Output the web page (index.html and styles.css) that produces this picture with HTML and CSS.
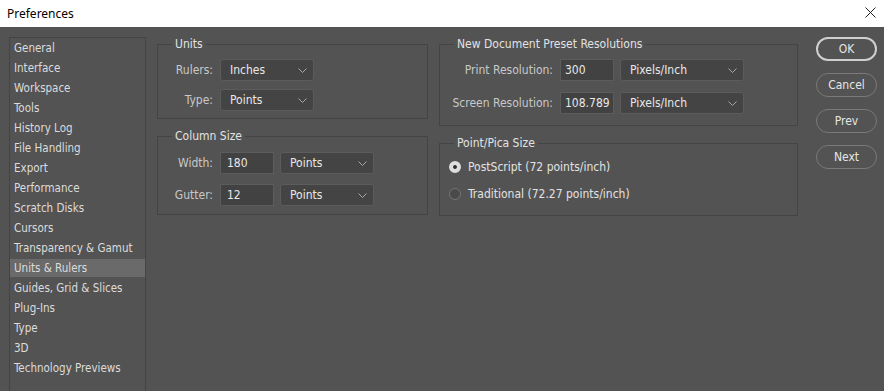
FILE: index.html
```
<!DOCTYPE html>
<html lang="en">

<head>
    <meta charset="utf-8">
    <title>Preferences</title>
    <link rel="stylesheet" href="styles.css">
</head>

<body>

    <header class="titlebar">
        <span class="title">Preferences</span>
        <svg class="luk" width="11" height="11" viewBox="0 0 11 11">
            <path d="M0.5 0.5 L10.5 10.5 M10.5 0.5 L0.5 10.5" stroke="#222" stroke-width="1" fill="none" />
        </svg>
    </header>

    <main class="dialog">
        <ul class="sidebar">
            <li>General</li>
            <li>Interface</li>
            <li>Workspace</li>
            <li>Tools</li>
            <li>History Log</li>
            <li>File Handling</li>
            <li>Export</li>
            <li>Performance</li>
            <li>Scratch Disks</li>
            <li>Cursors</li>
            <li>Transparency &amp; Gamut</li>
            <li class="valgt">Units &amp; Rulers</li>
            <li>Guides, Grid &amp; Slices</li>
            <li>Plug-Ins</li>
            <li>Type</li>
            <li>3D</li>
            <li>Technology Previews</li>
        </ul>

        <section class="kolonne venstre">
            <fieldset class="gruppe units">
                <legend>Units</legend>
                <div class="raekke">
                    <label>Rulers:</label>
                    <div class="vaelg">Inches<svg width="9" height="5" viewBox="0 0 9 5"><path d="M0.5 0.5 L4.5 4.5 L8.5 0.5" /></svg></div>
                </div>
                <div class="raekke">
                    <label>Type:</label>
                    <div class="vaelg">Points<svg width="9" height="5" viewBox="0 0 9 5"><path d="M0.5 0.5 L4.5 4.5 L8.5 0.5" /></svg></div>
                </div>
            </fieldset>

            <fieldset class="gruppe kolonnestr">
                <legend>Column Size</legend>
                <div class="raekke">
                    <label>Width:</label>
                    <div class="felt">180</div>
                    <div class="vaelg">Points<svg width="9" height="5" viewBox="0 0 9 5"><path d="M0.5 0.5 L4.5 4.5 L8.5 0.5" /></svg></div>
                </div>
                <div class="raekke">
                    <label>Gutter:</label>
                    <div class="felt">12</div>
                    <div class="vaelg">Points<svg width="9" height="5" viewBox="0 0 9 5"><path d="M0.5 0.5 L4.5 4.5 L8.5 0.5" /></svg></div>
                </div>
            </fieldset>
        </section>

        <section class="kolonne hoejre">
            <fieldset class="gruppe oploesning">
                <legend>New Document Preset Resolutions</legend>
                <div class="raekke">
                    <label>Print Resolution:</label>
                    <div class="felt">300</div>
                    <div class="vaelg">Pixels/Inch<svg width="9" height="5" viewBox="0 0 9 5"><path d="M0.5 0.5 L4.5 4.5 L8.5 0.5" /></svg></div>
                </div>
                <div class="raekke">
                    <label>Screen Resolution:</label>
                    <div class="felt">108.789</div>
                    <div class="vaelg">Pixels/Inch<svg width="9" height="5" viewBox="0 0 9 5"><path d="M0.5 0.5 L4.5 4.5 L8.5 0.5" /></svg></div>
                </div>
            </fieldset>

            <fieldset class="gruppe pica">
                <legend>Point/Pica Size</legend>
                <div class="radio valgt"><span class="prik"></span>PostScript (72 points/inch)</div>
                <div class="radio"><span class="prik"></span>Traditional (72.27 points/inch)</div>
            </fieldset>
        </section>

        <nav class="knapper">
            <button class="knap ok">OK</button>
            <button class="knap">Cancel</button>
            <button class="knap">Prev</button>
            <button class="knap">Next</button>
        </nav>
    </main>

</body>

</html>
```

FILE: styles.css
```
body {
    margin: 0;
    width: 884px;
    height: 391px;
    overflow: hidden;
    background-color: #535353;
    font-family: "DejaVu Sans Condensed", "DejaVu Sans", sans-serif;
    font-stretch: condensed;
    font-size: 11px;
    color: #dcdcdc;
}

.titlebar {
    height: 27px;
    background-color: #ffffff;
    display: flex;
    align-items: center;
    justify-content: space-between;
    padding: 0 8px 0 7px;
}

.title {
    font-family: "Noto Sans", sans-serif;
    font-stretch: normal;
    font-size: 12px;
    color: #000000;
}

.luk {
    margin-bottom: 3px;
}

.dialog {
    display: flex;
    align-items: flex-start;
    height: 364px;
}

/* venstre liste */
.sidebar {
    list-style: none;
    margin: 10px 0 0 9px;
    padding: 0;
    width: 135px;
    height: 360px;
    border: 1px solid #444444;
    border-bottom: none;
}

.sidebar li {
    height: 18px;
    line-height: 18px;
    border-top: 1px solid transparent;
    border-bottom: 1px solid transparent;
    background-clip: padding-box;
    padding-left: 4px;
    white-space: nowrap;
    font-size: 11.5px;
}

.sidebar li.valgt {
    background-color: #6a6a6a;
}

.kolonne {
    display: flex;
    flex-direction: column;
    gap: 10px;
    margin-top: 10px;
}

.venstre {
    margin-left: 11px;
    width: 271px;
}

.hoejre {
    margin-left: 11px;
    width: 359px;
}

.gruppe {
    margin: 0;
    min-width: 0;
    border: 1px solid #444444;
    padding: 8px 0 7px 0;
    display: flex;
    flex-direction: column;
    gap: 8px;
}

.gruppe legend {
    margin-left: 14px;
    padding: 0 3px;
    line-height: 14px;
    font-size: 12px;
    color: #e2e2e2;
}

.kolonnestr {
    gap: 10px;
    padding-top: 9px;
    padding-bottom: 8px;
}

.oploesning {
    gap: 11px;
    padding-bottom: 11px;
}

.pica {
    gap: 9px;
    padding: 8px 0 12px 0;
}

.raekke {
    display: flex;
    align-items: center;
    height: 22px;
}

.raekke label {
    width: 55px;
    margin-right: 7px;
    text-align: right;
    font-size: 12px;
    color: #c8c8c8;
}

.oploesning .raekke label {
    width: 113px;
}

.vaelg {
    box-sizing: border-box;
    height: 22px;
    width: 94px;
    padding: 0 6px 0 9px;
    display: flex;
    align-items: center;
    justify-content: space-between;
    background-color: #444444;
    border: 1px solid #5c5c5c;
    border-radius: 3px;
    font-size: 12px;
    color: #e8e8e8;
}

.vaelg svg {
    fill: none;
    stroke: #a8a8a8;
    stroke-width: 1;
}

.felt {
    box-sizing: border-box;
    height: 22px;
    width: 54px;
    margin-right: 6px;
    padding-left: 6px;
    line-height: 20px;
    background-color: #424242;
    border: 1px solid #5c5c5c;
    font-size: 12px;
    color: #e8e8e8;
}

.oploesning .felt {
    padding-left: 4px;
}

.oploesning .vaelg {
    width: 124px;
}

.radio {
    display: flex;
    align-items: center;
    height: 18px;
    font-size: 12px;
    color: #e2e2e2;
}

.prik {
    box-sizing: border-box;
    width: 12px;
    height: 12px;
    margin: 0 7px 0 9px;
    border-radius: 50%;
    background-color: #4a4a4a;
    border: 1px solid #757575;
}

.radio.valgt .prik {
    background-color: #dddddd;
    border: 4px solid #dddddd;
    background-image: radial-gradient(circle, #2c2c2c 0 2px, #dddddd 2.5px);
}

.knapper {
    display: flex;
    flex-direction: column;
    gap: 12px;
    margin: 10px 0 0 18px;
}

.knap {
    box-sizing: border-box;
    width: 61px;
    height: 24px;
    border-radius: 12px;
    background-color: #535353;
    border: 1px solid #7a7a7a;
    font-family: "DejaVu Sans Condensed", "DejaVu Sans", sans-serif;
    font-size: 12px;
    color: #e6e6e6;
    padding: 0;
    cursor: pointer;
}

.knap.ok {
    border: 2px solid #cfcfcf;
}
```
